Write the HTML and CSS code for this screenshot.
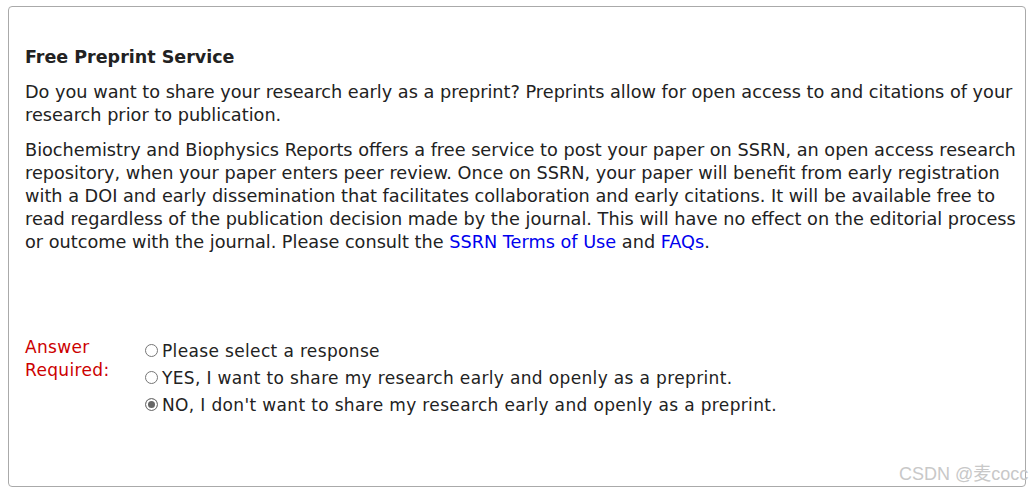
FILE: index.html
```html
<!DOCTYPE html>
<html lang="en">
<head>
    <meta charset="UTF-8">
    <title>Free Preprint Service</title>
    <link rel="stylesheet" href="styles.css">
</head>
<body>
    <div class="panel">
        <h3>Free Preprint Service</h3>
        <p>Do you want to share your research early as a preprint? Preprints allow for open access to and citations of your research prior to publication.</p>
        <p>Biochemistry and Biophysics Reports offers a free service to post your paper on SSRN, an open access research repository, when your paper enters peer review. Once on SSRN, your paper will benefit from early registration with a DOI and early dissemination that facilitates collaboration and early citations. It will be available free to read regardless of the publication decision made by the journal. This will have no effect on the editorial process or outcome with the journal. Please consult the <a href="#">SSRN Terms of Use</a> and <a href="#">FAQs</a>.</p>

        <div class="answer">
            <div class="required">Answer Required:</div>
            <div class="options">
                <label><input type="radio" name="preprint" value="none"> Please select a response</label>
                <label><input type="radio" name="preprint" value="yes"> YES, I want to share my research early and openly as a preprint.</label>
                <label><input type="radio" name="preprint" value="no" checked> NO, I don't want to share my research early and openly as a preprint.</label>
            </div>
        </div>
        <div class="mark">CSDN @麦cocc</div>
    </div>
</body>
</html>
```

FILE: styles.css
```css
body {
    margin: 6px 0 0 8px;
    font-family: "DejaVu Sans", Verdana, sans-serif;
    font-size: 17px;
    color: #222;
    background: #fff;
}

.panel {
    position: relative;
    box-sizing: border-box;
    width: 1018px;
    height: 481px;
    border: 1px solid #aaa;
    border-radius: 4px;
    padding: 40px 4px 0 16px;
}

h3 {
    font-size: 17.5px;
    line-height: 20px;
    margin: 0 0 14px;
}

p {
    margin: 0 0 12px;
    font-size: 17.7px;
    line-height: 23px;
}

a {
    color: #0000ee;
    text-decoration: none;
}

.answer {
    display: grid;
    grid-template-columns: 120px 1fr;
    margin-top: 82px;
    letter-spacing: 0.35px;
}

.required {
    color: #c00;
    line-height: 23px;
    width: 100px;
}

.options {
    padding-top: 1px;
}

.options label {
    display: flex;
    align-items: center;
    height: 27px;
}

input[type="radio"] {
    appearance: none;
    width: 13px;
    height: 13px;
    margin: 0 4px 0 0;
    border: 1px solid #767676;
    border-radius: 50%;
    background: #fff;
}

input[type="radio"]:checked {
    background: #666;
    box-shadow: inset 0 0 0 2px #fff;
}

.mark {
    position: absolute;
    left: 890px;
    bottom: 1px;
    white-space: nowrap;
    font-family: "Liberation Sans", "Noto Sans CJK SC", sans-serif;
    font-size: 18px;
    color: #c8c8c8;
}
```
